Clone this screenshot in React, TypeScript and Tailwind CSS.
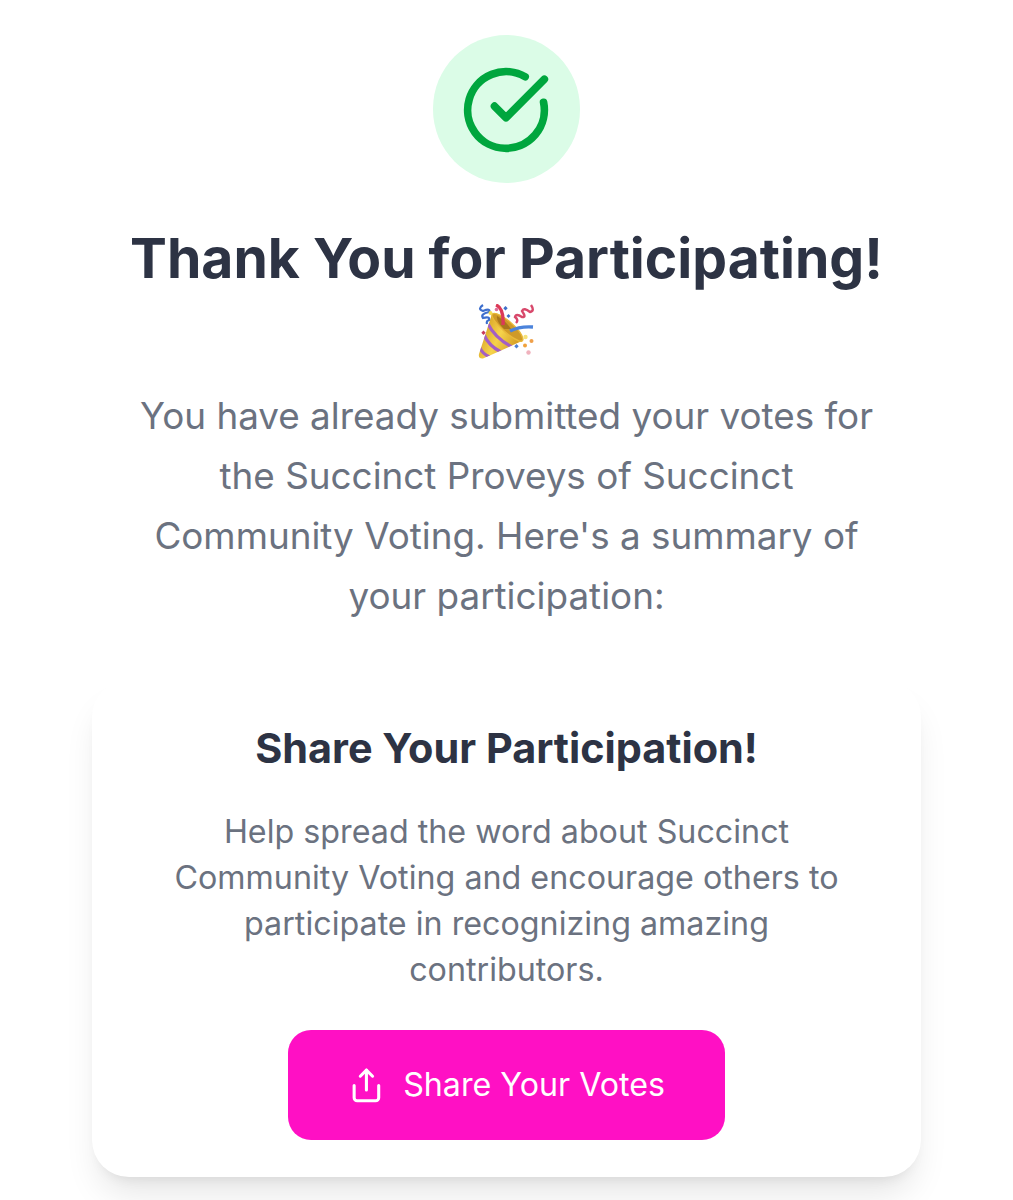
import React from "react";
import { CircleCheckBig, Share } from "lucide-react";

const PartyPopper = () => (
  <svg
    viewBox="0 0 56 56"
    className="mr-[2px] mt-px w-[56px] h-[56px]"
    role="img"
    aria-label="party popper"
  >
    <defs>
      <linearGradient id="cone" x1="0" y1="0.3" x2="1" y2="0.8">
        <stop offset="0" stopColor="#d39a1f" />
        <stop offset="0.45" stopColor="#f6d34b" />
        <stop offset="1" stopColor="#c98c18" />
      </linearGradient>
      <clipPath id="coneClip">
        <path d="M14 10 L1 50 Q0 55 5 54.5 L44 37 Q32 30 14 10Z" />
      </clipPath>
    </defs>
    <path d="M14 10 L1 50 Q0 55 5 54.5 L44 37 Q32 30 14 10Z" fill="url(#cone)" />
    <g clipPath="url(#coneClip)" fill="none" stroke="#a35fc4" strokeWidth="3.2">
      <path d="M10 20 Q17 34 34 43" />
      <path d="M6 31 Q11 42 23 48" />
      <path d="M1 42 Q4 50 12 53" />
    </g>
    <path
      d="M14 10 Q18 7 31 17 Q44 28 45 35 Q45 38 41 37 Q30 32 20 21 Q13 13 14 10Z"
      fill="#cf9a28"
      stroke="#e9b93a"
      strokeWidth="1.4"
    />
    <path d="M19 12 Q28 17 33 25 L26 25 Q18 17 19 12Z" fill="#a8761d" />
    <path d="M18 1 Q26 4 25 21" fill="none" stroke="#dc3a58" strokeWidth="3.4" />
    <path d="M32 27 Q42 22 55 23" fill="none" stroke="#4b83db" strokeWidth="3.4" />
    <path
      d="M5 1 Q-1 5 5 7 Q13 4 11 8 Q2 10 5 14 Q12 12 11 16 Q8 17 9 20"
      fill="none"
      stroke="#3d6fce"
      strokeWidth="2.2"
    />
    <path
      d="M53 1 Q57 7 52 8 Q46 3 44 7 Q49 14 44 13 Q38 9 37 13 Q41 16 38 19"
      fill="none"
      stroke="#d8486b"
      strokeWidth="2.4"
    />
    <path d="M27.5 2 l2.2 2.2 -2.2 2.2 -2.2 -2.2z" fill="#3f6fc9" />
    <path d="M30.5 10 l2 2 -2 2 -2 -2z" fill="#3f6fc9" />
    <path d="M38.5 40 l2.2 2.2 -2.2 2.2 -2.2 -2.2z" fill="#4b7fd4" />
    <path d="M5.5 26.5 l2.2 2.2 -2.2 2.2 -2.2 -2.2z" fill="#c93a5c" />
    <circle cx="18.5" cy="5.5" r="1.8" fill="#de6f98" />
    <circle cx="12.5" cy="9" r="2" fill="#f4dc55" />
    <circle cx="47.5" cy="33" r="2.2" fill="#f6e27a" />
    <circle cx="47" cy="41.5" r="2" fill="#f0a23c" />
    <circle cx="53.5" cy="37" r="2" fill="#efa04a" />
    <circle cx="50.5" cy="48.5" r="2.2" fill="#f0b2bd" />
  </svg>
);

const App = () => {
  return (
    <main className="h-[1200px] overflow-hidden bg-white px-[92px] pt-[35.4px] text-center font-['Inter',sans-serif]">
      <div className="mx-auto flex h-[147.4px] w-[147.4px] items-center justify-center rounded-full bg-[#dbfce7] pt-px pr-px">
        <CircleCheckBig size={92} className="text-[#00a63e]" />
      </div>

      <h1 className="mt-[38px] text-[55.25px] leading-[73.7px] font-bold text-[#2d3344]">
        Thank You for Participating!
        <span className="flex h-[73.7px] items-center justify-center">
          <PartyPopper />
        </span>
      </h1>

      <p className="mt-[18.2px] text-[36.85px] leading-[59.9px] text-[#6b7280]">
        You have already submitted your votes for
        <br />
        the Succinct Proveys of Succinct
        <br />
        Community Voting. Here&apos;s a summary of
        <br />
        your participation:
      </p>

      <section className="mt-[54px] h-[497px] rounded-[37px] bg-white pt-[36px] shadow-[0_23px_34.5px_-7px_rgba(0,0,0,0.1),0_9px_14px_-9px_rgba(0,0,0,0.1)]">
        <h2 className="text-[41.4px] leading-[64.5px] font-bold text-[#2d3344]">
          Share Your Participation!
        </h2>
        <p className="mt-[28.6px] text-[32.25px] leading-[46.06px] text-[#6b7280]">
          Help spread the word about Succinct
          <br />
          Community Voting and encourage others to
          <br />
          participate in recognizing amazing
          <br />
          contributors.
        </p>
        <button className="mx-auto mt-[36.8px] flex h-[110px] w-[437px] items-center justify-center gap-[18.4px] rounded-[23px] bg-[#ff10c4] pt-px text-[32.2px] text-white">
          <Share size={36.85} />
          Share Your Votes
        </button>
      </section>
    </main>
  );
};

export default App;
